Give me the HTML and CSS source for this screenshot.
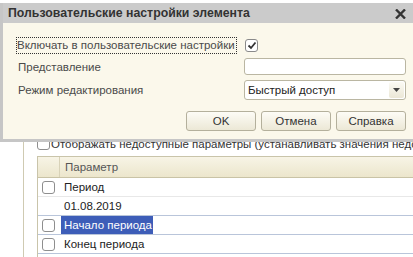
FILE: index.html
```html
<!DOCTYPE html>
<html lang="ru">
<head>
<meta charset="utf-8">
<link rel="stylesheet" href="styles.css">
</head>
<body>
<div class="form">
  <div class="frame">
    <div class="show-row">
      <span class="cb"></span>
      <span class="show-text">Отображать недоступные параметры (устанавливать значения недоступ</span>
    </div>
    <div class="table">
      <div class="thead">
        <div class="th-cb"></div>
        <div class="th-name">Параметр</div>
      </div>
      <div class="tr light">
        <div class="td-cb"><span class="cb"></span></div>
        <div class="td-name">Период</div>
      </div>
      <div class="tr">
        <div class="td-cb"></div>
        <div class="td-value">01.08.2019</div>
      </div>
      <div class="tr">
        <div class="td-cb"><span class="cb"></span></div>
        <div class="td-name"><span class="sel">Начало периода</span></div>
      </div>
      <div class="tr">
        <div class="td-cb"><span class="cb"></span></div>
        <div class="td-name">Конец периода</div>
      </div>
      <div class="tr">
        <div class="td-cb"><span class="cb"></span></div>
        <div class="td-name"></div>
      </div>
    </div>
  </div>
</div>

<div class="dialog">
  <div class="titlebar">
    <span class="title">Пользовательские настройки элемента</span>
    <svg class="close" width="11" height="10" viewBox="0 0 11 10"><path d="M1 0.5 L10 9.5 M10 0.5 L1 9.5" stroke="#333" stroke-width="2.4" fill="none"/></svg>
  </div>
  <div class="body">
    <div class="grid">
      <div class="label"><span class="focus">Включать в пользовательские настройки</span></div>
      <div class="ctl"><span class="check"><svg width="10" height="9" viewBox="0 0 10 9"><path d="M1.5 4.5 L4 7 L8.5 1.5" stroke="#333" stroke-width="1.8" fill="none"/></svg></span></div>
      <div class="label">Представление</div>
      <div class="ctl"><div class="input"></div></div>
      <div class="label">Режим редактирования</div>
      <div class="ctl"><div class="select"><span class="sel-text">Быстрый доступ</span><span class="sel-btn"><svg width="7" height="4" viewBox="0 0 7 4"><path d="M0 0 H7 L3.5 4 Z" fill="#444"/></svg></span></div></div>
    </div>
    <div class="buttons">
      <button class="btn">OK</button>
      <button class="btn">Отмена</button>
      <button class="btn">Справка</button>
    </div>
  </div>
</div>
</body>
</html>
```
FILE: styles.css
```css
html, body {
  margin: 0;
  padding: 0;
  overflow: hidden;
  background: #ffffff;
  font-family: "Liberation Sans", Arial, sans-serif;
  font-size: 11.5px;
  color: #333;
}
body {
  width: 413px;
  height: 257px;
  position: relative;
}

/* underlying form */
.form {
  padding-top: 131px;
  padding-left: 23px;
}
.frame {
  border-left: 1px solid #cfcab2;
  padding-left: 13px;
  height: 126px;
  overflow: hidden;
}
.show-row {
  display: flex;
  align-items: center;
  height: 25px;
  white-space: nowrap;
  gap: 1px;
}
.show-text { color: #333; }
.cb {
  display: inline-block;
  flex-shrink: 0;
  width: 11px;
  height: 11px;
  border: 1px solid #8e8e8e;
  border-radius: 3px;
  background: #fff;
}
.table {
  border-left: 1px solid #c9c4aa;
  border-top: 1px solid #c9c4aa;
}
.thead {
  display: flex;
  height: 20px;
  background: linear-gradient(#f7f4e6, #ece6cc);
  border-bottom: 1px solid #c9c3a6;
}
.th-cb {
  width: 21px;
  border-right: 1px solid #d8d2b8;
}
.th-name {
  padding-left: 5px;
  line-height: 20px;
  color: #555;
}
.tr {
  display: flex;
  height: 18px;
  border-bottom: 1px solid #b9c5da;
}
.tr.light { border-bottom-color: #e8e8e8; }
.td-cb {
  width: 22px;
  flex-shrink: 0;
  display: flex;
  align-items: center;
  padding-left: 4px;
  box-sizing: border-box;
}
.td-name {
  padding-left: 4px;
  line-height: 18px;
  color: #222;
  white-space: nowrap;
}
.td-value {
  line-height: 18px;
  color: #222;
  padding-left: 4px;
}
.sel {
  display: inline-block;
  background: #3d5db8;
  color: #fff;
  padding: 0 1px 0 3px;
  margin-left: -3px;
  line-height: 18px;
  white-space: nowrap;
}

/* dialog */
.dialog {
  position: absolute;
  top: 3px;
  left: 0;
  width: 420px;
  box-sizing: border-box;
  border-left: 3px solid #c6c6c6;
  border-bottom: 3px solid #c6c6c6;
  background: #fbf8eb;
}
.titlebar {
  height: 20px;
  background: #cbcbcb;
  display: flex;
  align-items: center;
  justify-content: space-between;
  padding: 0 14px 0 5px;
}
.title {
  font-weight: bold;
  font-size: 12.3px;
  color: #333;
}
.close { margin-top: 1px; }
.body {
  padding: 14px 14px 8px 15px;
}
.grid {
  display: grid;
  grid-template-columns: 226px 162px;
  grid-template-rows: 16px 17px 19px;
  row-gap: 5px;
  align-items: center;
}
.label {
  color: #4a4a4a;
  white-space: nowrap;
}
.focus {
  display: inline-block;
  outline: 1px dotted #333;
  outline-offset: 0;
  padding: 0 1px 0 0;
  margin-left: -1px;
  line-height: 15px;
}
.check {
  display: inline-flex;
  align-items: center;
  justify-content: center;
  width: 11px;
  height: 11px;
  border: 1px solid #8a8a8a;
  border-radius: 3px;
  background: #fff;
  margin-left: 1px;
}
.input {
  height: 15px;
  border: 1px solid #bab6a2;
  border-radius: 3px;
  background: #fff;
}
.select {
  height: 18px;
  border: 1px solid #bab6a2;
  border-radius: 3px;
  background: #fff;
  display: flex;
  align-items: center;
  justify-content: space-between;
  margin-top: 1px;
}
.sel-text {
  padding-left: 3px;
  color: #222;
}
.sel-btn {
  width: 15px;
  height: 16px;
  margin-right: 1px;
  display: flex;
  align-items: center;
  justify-content: center;
  background: linear-gradient(#fbfaf4, #ebe7d6);
  border-radius: 2px;
}
.buttons {
  display: flex;
  justify-content: flex-end;
  gap: 5px;
  margin-top: 12px;
  width: 388px;
}
.btn {
  width: 70px;
  height: 20px;
  border: 1px solid #b4b09c;
  border-radius: 3px;
  background: linear-gradient(#fdfcf6, #ece8d6);
  font-family: "Liberation Sans", Arial, sans-serif;
  font-size: 11.5px;
  color: #333;
  padding: 0;
}
```
